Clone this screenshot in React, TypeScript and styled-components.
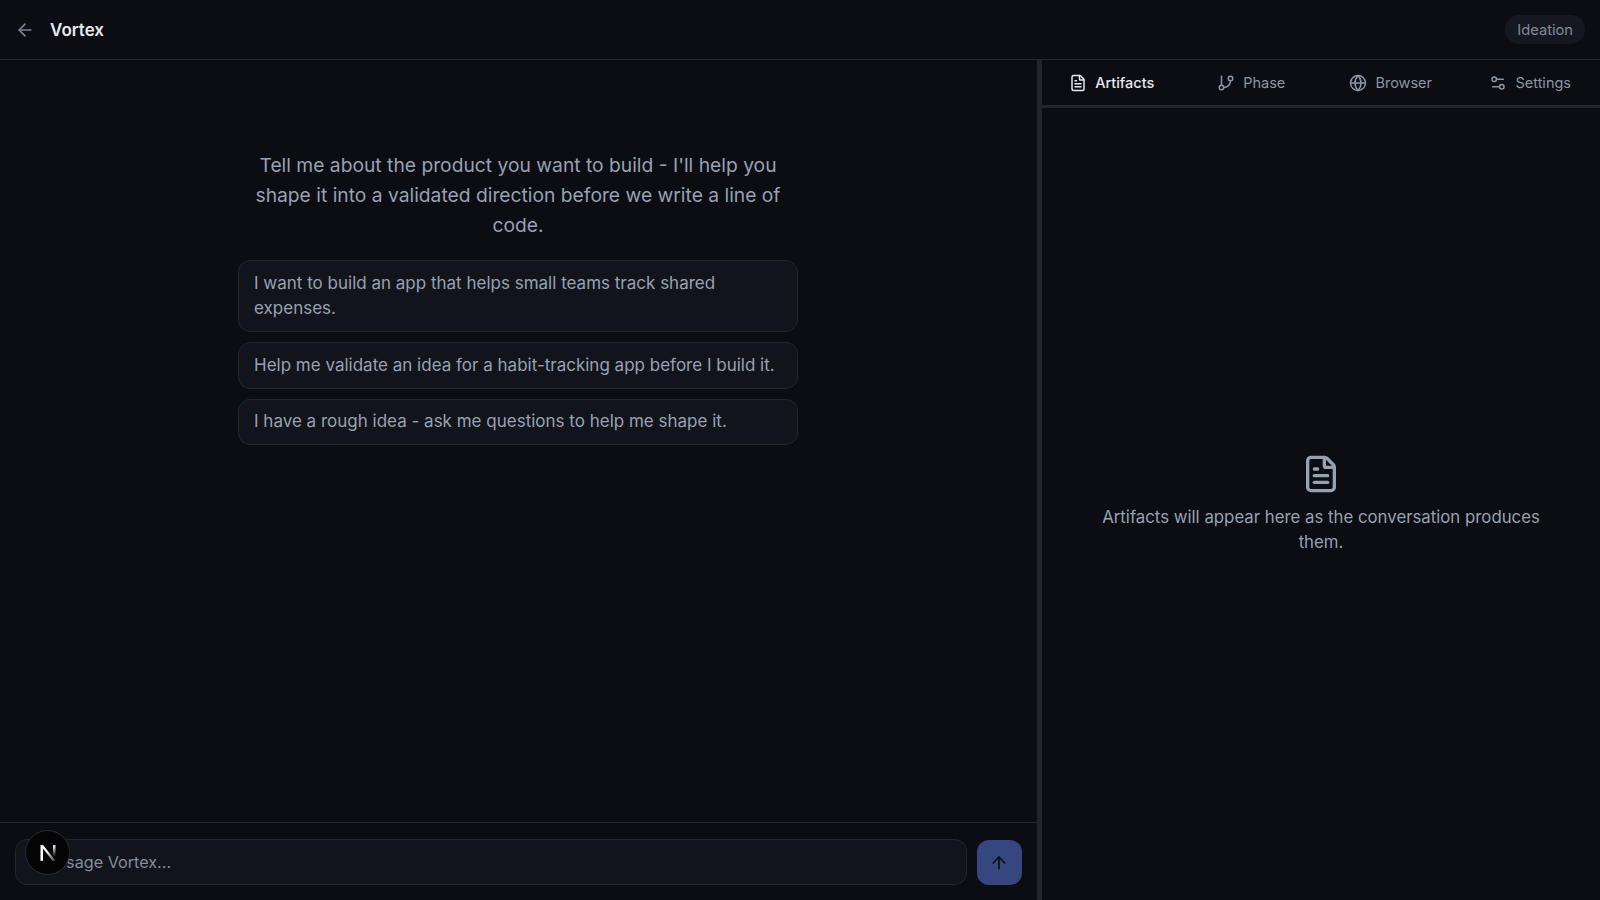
import React from "react";
import styled, { createGlobalStyle } from "styled-components";
import { ArrowLeft, ArrowUp, FileText, GitBranch, Globe, Settings2 } from "lucide-react";

const Global = createGlobalStyle`
  html, body { margin: 0; padding: 0; height: 100%; background: #0b0d12; }
  #root { height: 100%; }
  * { box-sizing: border-box; }
`;

const Page = styled.div`
  height: 100vh;
  display: flex;
  flex-direction: column;
  background: #0b0d12;
  color: #98a1b3;
  font-family: Inter, "Liberation Sans", sans-serif;
  overflow: hidden;
`;

const Header = styled.header`
  height: 60px;
  flex: none;
  display: flex;
  align-items: center;
  justify-content: space-between;
  padding: 0 15px 0 15px;
  border-bottom: 1px solid #25272d;
`;

const TitleGroup = styled.div`
  display: flex;
  align-items: center;
  gap: 15px;
`;

const BackButton = styled.button`
  display: flex;
  padding: 0;
  border: 0;
  background: none;
  color: #7d8391;
`;

const Title = styled.h1`
  margin: 0;
  font-size: 17px;
  font-weight: 600;
  line-height: 24px;
  color: #e6e8ee;
`;

const PhasePill = styled.span`
  display: flex;
  align-items: center;
  height: 29px;
  padding: 0 12px;
  border-radius: 15px;
  background: #151820;
  color: #838a9a;
  font-size: 14.7px;
`;

const Body = styled.div`
  flex: 1;
  min-height: 0;
  display: flex;
`;

const ChatPane = styled.main`
  width: 1037px;
  flex: none;
  display: flex;
  flex-direction: column;
`;

const Conversation = styled.div`
  flex: 1;
  min-height: 0;
  display: flex;
  flex-direction: column;
  align-items: center;
  padding: 90px 1px 0 0;
`;

const Intro = styled.p`
  width: 560px;
  margin: 0 0 20px;
  font-size: 19.25px;
  line-height: 30px;
  text-align: center;
  color: #98a1b3;
`;

const Suggestions = styled.div`
  width: 560px;
  display: flex;
  flex-direction: column;
  gap: 10px;
`;

const Suggestion = styled.button`
  padding: 9.5px 15px;
  border: 1px solid #23262e;
  border-radius: 12px;
  background: #12141b;
  color: #98a1b3;
  font: 400 17px/25.5px Inter, "Liberation Sans", sans-serif;
  text-align: left;
`;

const Composer = styled.form`
  flex: none;
  display: flex;
  align-items: flex-end;
  gap: 9.5px;
  height: 78px;
  padding: 0 15.5px 15px 15px;
  border-top: 1px solid #25272d;
`;

const MessageInput = styled.input`
  flex: 1;
  height: 46px;
  padding: 0 17.5px 1px;
  border: 1px solid #23262e;
  border-radius: 12px;
  background: #12141b;
  font: 400 16.2px Inter, "Liberation Sans", sans-serif;
  color: #98a1b3;
  &::placeholder { color: #858da0; opacity: 1; }
`;

const SendButton = styled.button`
  width: 45px;
  height: 45px;
  flex: none;
  display: flex;
  align-items: center;
  justify-content: center;
  padding: 0;
  border: 0;
  border-radius: 12px;
  background: #36467f;
  color: #0b0f1c;
`;

const Splitter = styled.div`
  width: 5px;
  flex: none;
  background: #22242c;
`;

const SidePane = styled.aside`
  flex: 1;
  min-width: 0;
  display: flex;
  flex-direction: column;
`;

const Tabs = styled.nav`
  height: 48px;
  flex: none;
  display: grid;
  grid-template-columns: repeat(4, 1fr);
  border-bottom: 3px solid #22242c;
`;

const Tab = styled.button<{ $active?: boolean }>`
  display: flex;
  align-items: center;
  justify-content: center;
  gap: 8px;
  padding: 0;
  border: 0;
  background: none;
  color: ${(p) => (p.$active ? "#e6e8ee" : "#8d95a6")};
  font: ${(p) => (p.$active ? 500 : 400)} 14.5px Inter, "Liberation Sans", sans-serif;
`;

const EmptyState = styled.div`
  flex: 1;
  display: flex;
  flex-direction: column;
  align-items: center;
  justify-content: center;
  gap: 11px;
  padding: 0 48px;
  color: #98a1b3;
`;

const EmptyText = styled.p`
  margin: 0;
  font-size: 16.8px;
  line-height: 25px;
  text-align: center;
`;

const DevBadge = styled.div`
  position: fixed;
  left: 25px;
  top: 830px;
  width: 45px;
  height: 45px;
  display: flex;
  align-items: center;
  justify-content: center;
  border-radius: 50%;
  background: #050505;
  border: 1px solid #2a2c31;
`;

const tabs = [
  { label: "Artifacts", Icon: FileText, active: true },
  { label: "Phase", Icon: GitBranch },
  { label: "Browser", Icon: Globe },
  { label: "Settings", Icon: Settings2 },
];

const prompts = [
  "I want to build an app that helps small teams track shared expenses.",
  "Help me validate an idea for a habit-tracking app before I build it.",
  "I have a rough idea - ask me questions to help me shape it.",
];

export default function App() {
  return (
    <Page>
      <Global />
      <Header>
        <TitleGroup>
          <BackButton aria-label="Back"><ArrowLeft size={20} /></BackButton>
          <Title>Vortex</Title>
        </TitleGroup>
        <PhasePill>Ideation</PhasePill>
      </Header>
      <Body>
        <ChatPane>
          <Conversation>
            <Intro>
              Tell me about the product you want to build - I'll help you shape it into a validated
              direction before we write a line of code.
            </Intro>
            <Suggestions>
              {prompts.map((p) => (
                <Suggestion key={p}>{p}</Suggestion>
              ))}
            </Suggestions>
          </Conversation>
          <Composer>
            <MessageInput placeholder="Message Vortex..." />
            <SendButton aria-label="Send"><ArrowUp size={20} /></SendButton>
          </Composer>
        </ChatPane>
        <Splitter />
        <SidePane>
          <Tabs>
            {tabs.map(({ label, Icon, active }) => (
              <Tab key={label} $active={active}>
                <Icon size={18} />
                {label}
              </Tab>
            ))}
          </Tabs>
          <EmptyState>
            <FileText size={40} />
            <EmptyText>Artifacts will appear here as the conversation produces them.</EmptyText>
          </EmptyState>
        </SidePane>
      </Body>
      <DevBadge>
        <svg width="20" height="20" viewBox="0 0 20 20" aria-hidden="true">
          <defs>
            <linearGradient id="nright" x1="0" y1="0" x2="0" y2="1">
              <stop offset="0" stopColor="#fff" />
              <stop offset="1" stopColor="#fff" stopOpacity="0" />
            </linearGradient>
            <linearGradient id="ndiag" gradientUnits="userSpaceOnUse" x1="8" y1="8" x2="17" y2="18">
              <stop offset="0" stopColor="#fff" />
              <stop offset="1" stopColor="#fff" stopOpacity="0.25" />
            </linearGradient>
          </defs>
          <path d="M2.5 2.2h2.5v15.6H2.5z" fill="#fff" />
          <path d="M2.5 2.2h2.8L17.5 17.8h-3z" fill="url(#ndiag)" />
          <path d="M15 2.2h2.5v11.5H15z" fill="url(#nright)" />
        </svg>
      </DevBadge>
    </Page>
  );
}
